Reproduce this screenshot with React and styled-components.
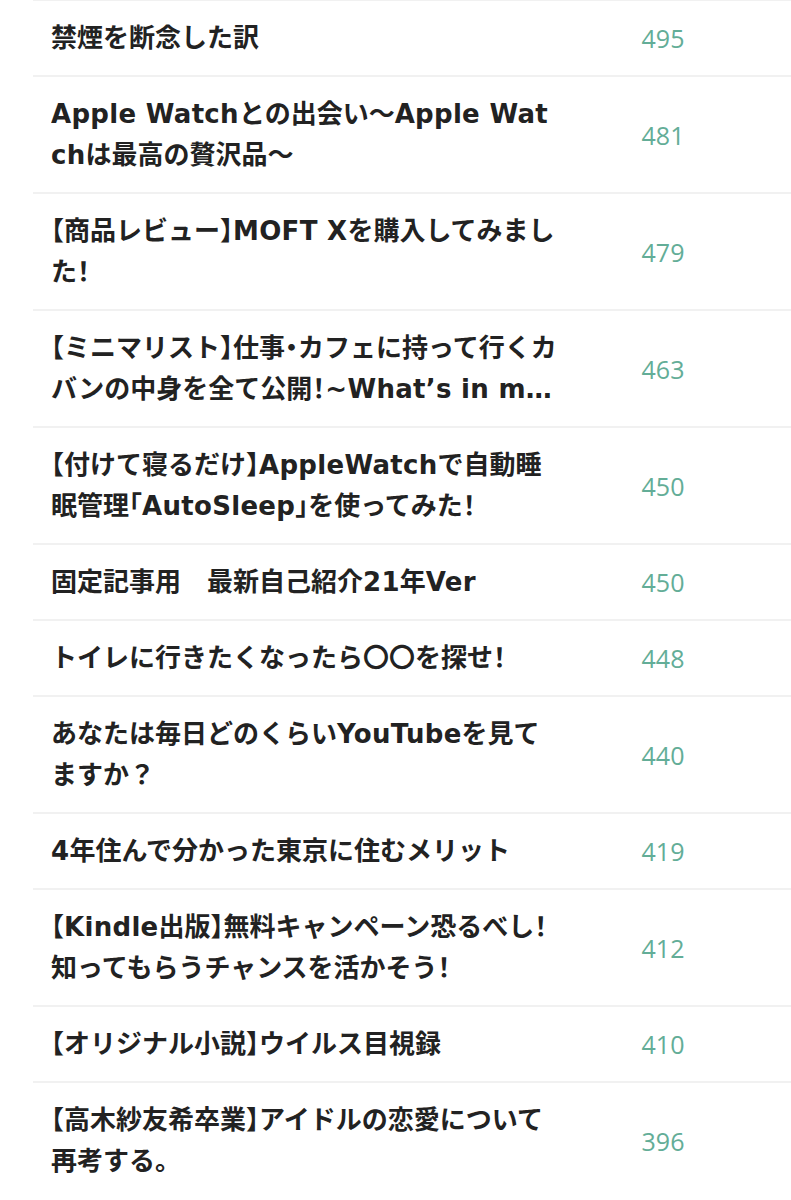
import React from 'react';
import styled, { createGlobalStyle } from 'styled-components';

const GlobalStyle = createGlobalStyle`
  html, body {
    margin: 0;
    padding: 0;
    background: #fff;
  }
`;

const articles = [
  { title: '禁煙を断念した訳', views: 495 },
  { title: 'Apple Watchとの出会い〜Apple Watchは最高の贅沢品〜', views: 481 },
  { title: '【商品レビュー】MOFT Xを購入してみました！', views: 479 },
  { title: '【ミニマリスト】仕事・カフェに持って行くカバンの中身を全て公開！~What’s in my bag?~', views: 463 },
  { title: '【付けて寝るだけ】AppleWatchで自動睡眠管理「AutoSleep」を使ってみた！', views: 450 },
  { title: '固定記事用　最新自己紹介21年Ver', views: 450 },
  { title: 'トイレに行きたくなったら〇〇を探せ！', views: 448 },
  { title: 'あなたは毎日どのくらいYouTubeを見てますか？', views: 440 },
  { title: '4年住んで分かった東京に住むメリット', views: 419 },
  { title: '【Kindle出版】無料キャンペーン恐るべし！知ってもらうチャンスを活かそう！', views: 412 },
  { title: '【オリジナル小説】ウイルス目視録', views: 410 },
  { title: '【高木紗友希卒業】アイドルの恋愛について再考する。', views: 396 },
];

// latin runs get a touch of tracking, like the original's western glyphs
const LATIN = /([\x20-\x7E’]+)/;

const List = styled.ul`
  list-style: none;
  margin: -1px 0 0 33px;
  padding: 0;
`;

const Row = styled.li`
  display: flex;
  align-items: center;
  padding: 16.5px 21px 16.5px 18px;
  border-top: 2px solid #f1f1f1;
`;

const Title = styled.div`
  width: 507px;
  flex: 0 0 507px;
  font-family: "DejaVu Sans", "Noto Sans CJK JP", sans-serif;
  font-feature-settings: "halt";
  font-weight: 700;
  font-size: 26px;
  line-height: 41px;
  color: #222;
  word-break: break-all;
  display: -webkit-box;
  -webkit-box-orient: vertical;
  -webkit-line-clamp: 2;
  overflow: hidden;
`;

const Latin = styled.span`
  letter-spacing: 0.3px;
`;

const Views = styled.div`
  flex: 1;
  padding-right: 2px;
  text-align: center;
  font-family: "Open Sans", "Liberation Sans", sans-serif;
  font-weight: 400;
  font-size: 25px;
  color: #63ad97;
`;

function renderTitle(text) {
  return text
    .split(LATIN)
    .filter(Boolean)
    .map((part, i) => (/^[\x20-\x7E’]+$/.test(part) ? <Latin key={i}>{part}</Latin> : part));
}

export default function App() {
  return (
    <>
      <GlobalStyle />
      <List>
        {articles.map((a, i) => (
          <Row key={i}>
            <Title>{renderTitle(a.title)}</Title>
            <Views>{a.views}</Views>
          </Row>
        ))}
      </List>
    </>
  );
}
